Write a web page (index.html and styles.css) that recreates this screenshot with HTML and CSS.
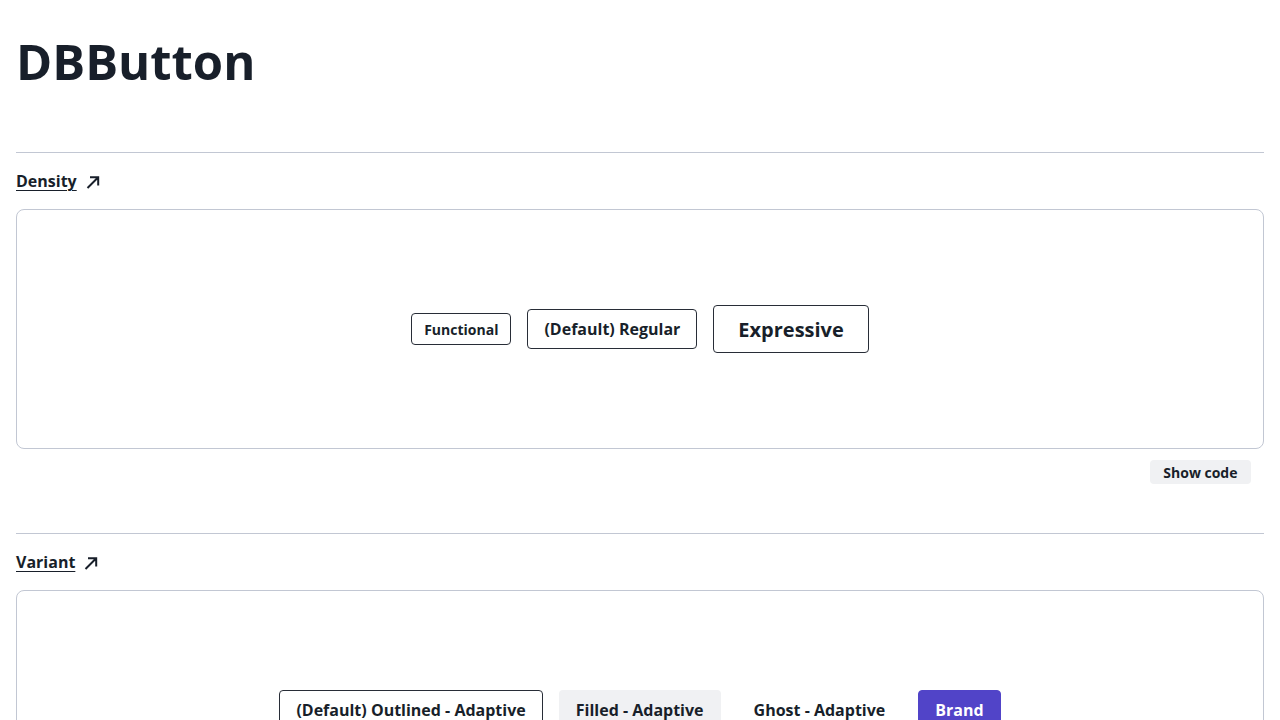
FILE: index.html
```html
<!DOCTYPE html>
<html lang="en">
<head>
<meta charset="utf-8">
<title>DBButton</title>
<link rel="stylesheet" href="styles.css">
</head>
<body>
<main class="page">
  <h1 class="title">DBButton</h1>

  <section class="section">
    <hr class="divider">
    <h2 class="section-head"><a class="section-link" href="#density">Density</a>
      <svg class="arrow" width="16" height="16" viewBox="0 0 16 16" aria-hidden="true"><path d="M2.5 14 L13 3.5 M5 3.3 H13.2 V11.5" fill="none" stroke="#181f2a" stroke-width="2"/></svg>
    </h2>
    <div class="card">
      <button class="btn btn-outlined btn-functional">Functional</button>
      <button class="btn btn-outlined btn-regular">(Default) Regular</button>
      <button class="btn btn-outlined btn-expressive">Expressive</button>
    </div>
    <div class="code-row"><button class="show-code">Show code</button></div>
  </section>

  <section class="section">
    <hr class="divider">
    <h2 class="section-head"><a class="section-link" href="#variant">Variant</a>
      <svg class="arrow" width="16" height="16" viewBox="0 0 16 16" aria-hidden="true"><path d="M2.5 14 L13 3.5 M5 3.3 H13.2 V11.5" fill="none" stroke="#181f2a" stroke-width="2"/></svg>
    </h2>
    <div class="card">
      <button class="btn btn-outlined btn-regular">(Default) Outlined - Adaptive</button>
      <button class="btn btn-filled btn-regular">Filled - Adaptive</button>
      <button class="btn btn-ghost btn-regular">Ghost - Adaptive</button>
      <button class="btn btn-brand btn-regular">Brand</button>
    </div>
    <div class="code-row"><button class="show-code">Show code</button></div>
  </section>
</main>
</body>
</html>
```
FILE: styles.css
```css
* { box-sizing: border-box; }
html, body { margin: 0; padding: 0; background: #ffffff; }
body {
  font-family: "Open Sans", "Noto Sans", sans-serif;
  color: #181f2a;
}
.page { padding: 0 16px; }
.title {
  margin: 31px 0 0;
  font-size: 49px;
  line-height: 60px;
  font-weight: 700;
  letter-spacing: 0;
}
.section { margin-top: 61px; }
.section + .section { margin-top: 49px; }
.divider {
  margin: 0;
  border: 0;
  border-top: 1px solid #c2c7d3;
  height: 0;
}
.section-head {
  margin: 16px 0 16px;
  font-size: 16px;
  line-height: 24px;
  font-weight: 700;
  display: flex;
  align-items: center;
  gap: 8px;
}
.section-link {
  color: #181f2a;
  text-decoration: underline;
  text-underline-offset: 3px;
  text-decoration-thickness: 1px;
}
.arrow { display: block; margin-top: 1px; }
.card {
  height: 240px;
  border: 1px solid #c2c7d3;
  border-radius: 8px;
  display: flex;
  align-items: center;
  justify-content: center;
  gap: 16px;
}
.btn {
  font-family: "Open Sans", "Noto Sans", sans-serif;
  font-weight: 700;
  color: #181f2a;
  border-radius: 4px;
  border: 1px solid transparent;
  background: transparent;
  margin: 0;
  cursor: pointer;
}
.btn-outlined { border-color: #282d37; background: #ffffff; }
.btn-filled { background: #f0f1f3; }
.btn-ghost { background: transparent; }
.btn-brand { background: #5144c8; color: #ffffff; border-color: #5144c8; }
.btn-functional { height: 32px; padding: 0 12px; font-size: 14px; }
.btn-regular { height: 40px; padding: 0 16px; font-size: 16px; }
.btn-expressive { height: 48px; padding: 0 24px; font-size: 20px; }
.code-row {
  display: flex;
  justify-content: flex-end;
  padding: 11px 13px 0 0;
}
.show-code {
  font-family: "Open Sans", "Noto Sans", sans-serif;
  font-size: 14px;
  font-weight: 700;
  color: #181f2a;
  background: #f0f1f3;
  border: 0;
  border-radius: 4px;
  height: 24px;
  padding: 0 13.5px;
  margin: 0;
}
```
